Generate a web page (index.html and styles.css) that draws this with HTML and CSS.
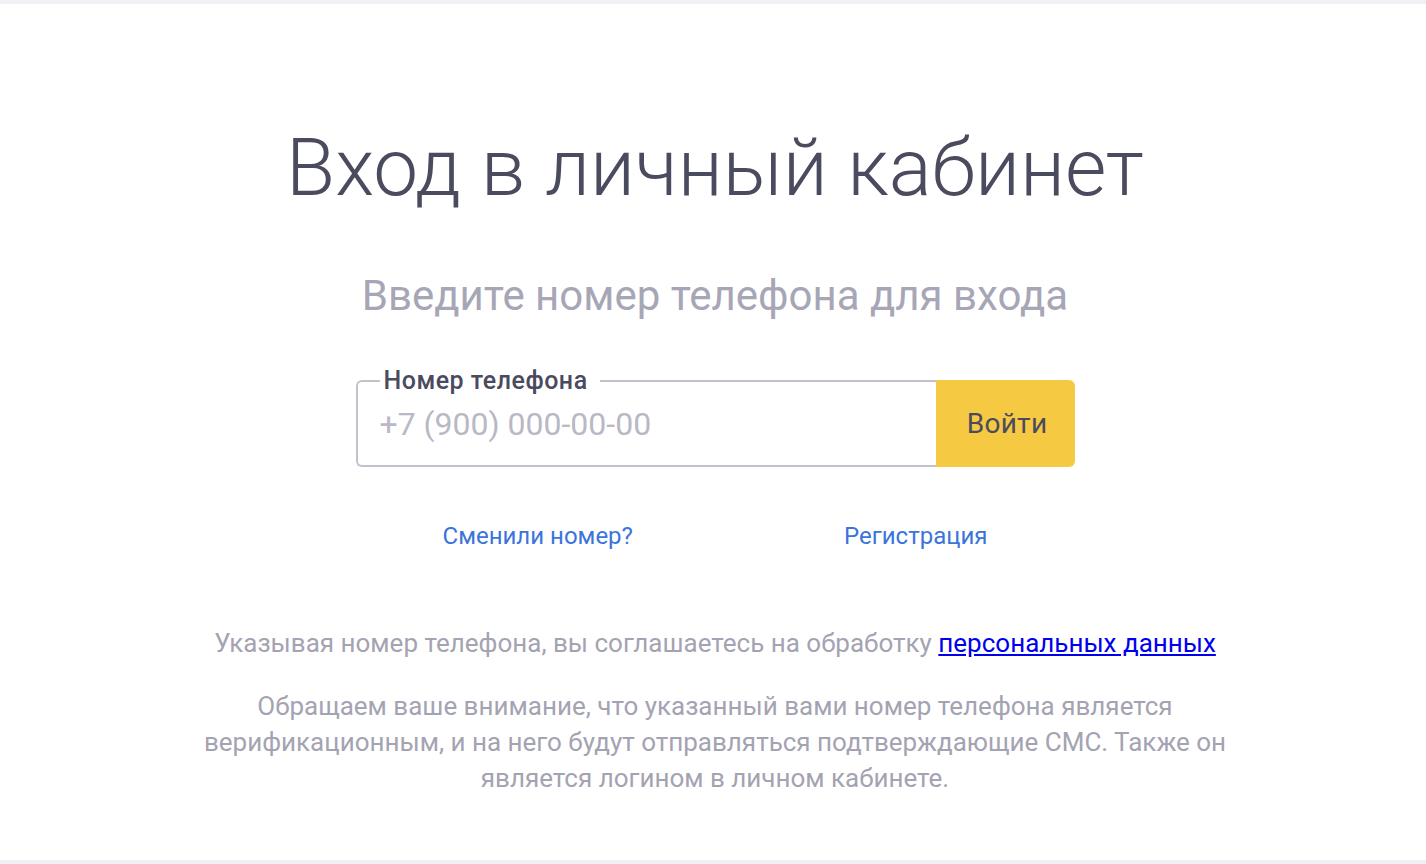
FILE: index.html
```html
<!DOCTYPE html>
<html lang="ru">
<head>
<meta charset="utf-8">
<title>Вход в личный кабинет</title>
<link rel="stylesheet" href="styles.css">
</head>
<body>
<div class="page">
  <main class="login">
    <h1 class="title">Вход в личный кабинет</h1>
    <p class="subtitle">Введите номер телефона для входа</p>
    <form class="phone-form">
      <fieldset class="phone-field">
        <legend class="phone-label">Номер телефона</legend>
        <input class="phone-input" type="text" placeholder="+7 (900) 000-00-00">
      </fieldset>
      <button class="submit" type="button">Войти</button>
    </form>
    <div class="links">
      <a class="link" href="#">Сменили номер?</a>
      <a class="link" href="#">Регистрация</a>
    </div>
    <p class="agree">Указывая номер телефона, вы соглашаетесь на обработку <a href="#" class="pd">персональных данных</a></p>
    <p class="note">Обращаем ваше внимание, что указанный вами номер телефона является верификационным, и на него будут отправляться подтверждающие СМС. Также он является логином в личном кабинете.</p>
  </main>
</div>
</body>
</html>
```

FILE: styles.css
```css
html, body {
  margin: 0;
  padding: 0;
  background: #ffffff;
}
body {
  font-family: Roboto, "Noto Sans", sans-serif;
  color: #4b4b5f;
}
.page {
  min-height: 864px;
  box-sizing: border-box;
  border-top: 4px solid #f1f1f5;
  border-bottom: 4px solid #efeff4;
  display: flex;
  flex-direction: column;
}
.login {
  flex: 1;
  display: flex;
  flex-direction: column;
  align-items: center;
  padding-top: 116px;
  padding-left: 4px;
}
.title {
  margin: 0;
  font-size: 80px;
  font-weight: 300;
  line-height: 96px;
  color: #4b4b5f;
}
.subtitle {
  margin: 55px 0 0;
  font-size: 42px;
  font-weight: 400;
  line-height: 50px;
  color: #a7a6b6;
}
.phone-form {
  margin-top: 59px;
  display: flex;
  width: 719px;
  height: 87px;
}
.phone-field {
  flex: 1;
  margin: 0;
  padding: 0 22px;
  border: 2px solid #c2c1cc;
  border-right: none;
  border-radius: 6px 0 0 6px;
  position: relative;
  top: -9px;
  height: 96px;
  box-sizing: border-box;
  min-width: 0;
}
.phone-label {
  padding: 0 12px 0 4px;
  margin-left: 0;
  font-size: 25px;
  font-weight: 500;
  color: #4b4b5f;
  line-height: 20px;
  letter-spacing: 0.5px;
}
.phone-input {
  border: none;
  outline: none;
  padding: 0;
  margin-top: 14px;
  width: 100%;
  font-family: Roboto, "Noto Sans", sans-serif;
  font-size: 32px;
  color: #4b4b5f;
  background: transparent;
}
.phone-input::placeholder {
  color: #b9b8c5;
}
.submit {
  width: 139px;
  height: 87px;
  border: none;
  border-radius: 0 6px 6px 0;
  background: #f5c942;
  font-family: Roboto, "Noto Sans", sans-serif;
  font-size: 28px;
  color: #4b4b5f;
  padding: 0 0 0 4px;
  letter-spacing: 0.3px;
}
.links {
  margin-top: 54px;
  display: flex;
  gap: 211px;
}
.link {
  font-size: 24px;
  line-height: 30px;
  color: #3b74da;
  text-decoration: none;
}
.agree {
  margin: 74px 0 0;
  font-size: 26px;
  line-height: 36px;
  color: #a4a3b2;
  text-align: center;
}
.pd {
  color: #0000ee;
  text-decoration: underline;
}
.note {
  margin: 27px 0 0;
  max-width: 1030px;
  font-size: 26px;
  line-height: 36px;
  color: #a4a3b2;
  text-align: center;
}
```
